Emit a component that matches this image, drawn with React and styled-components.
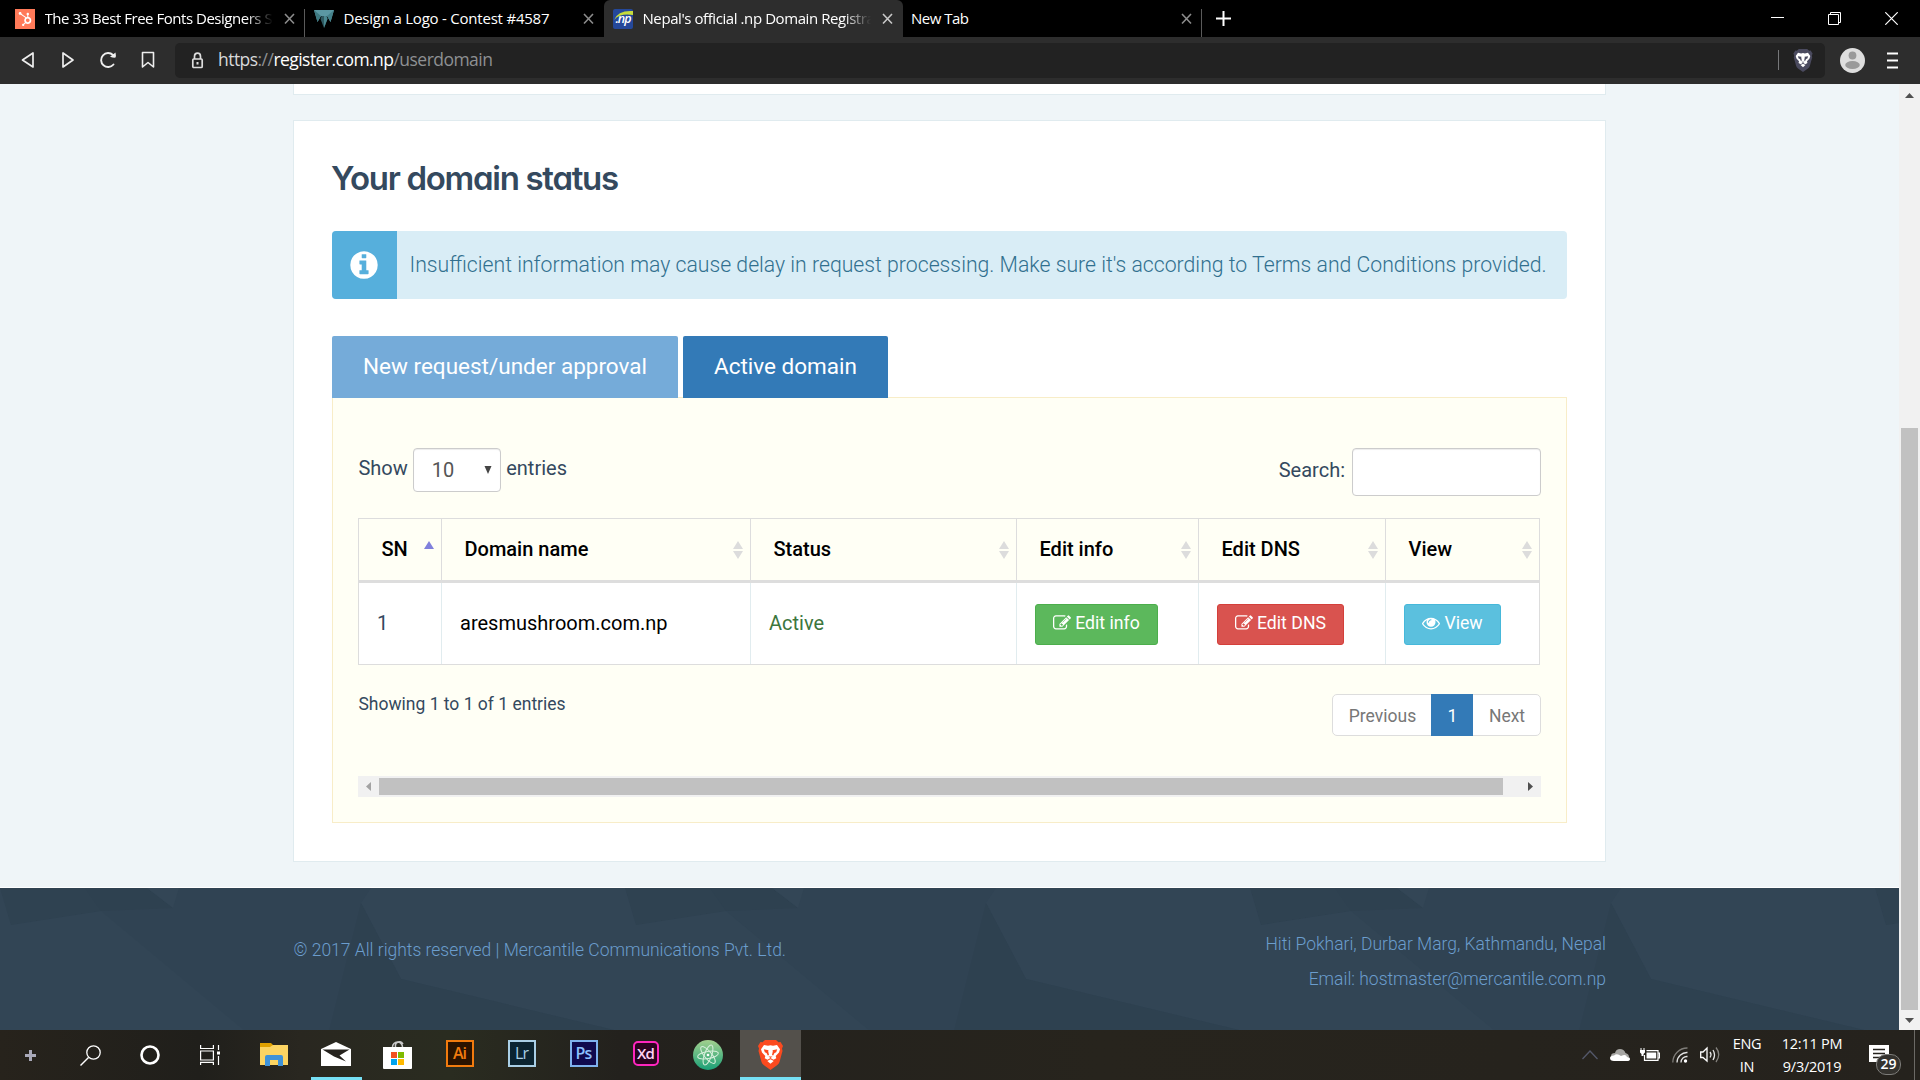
import React from "react";
import styled, { createGlobalStyle, css } from "styled-components";
import { FaHubspot } from "react-icons/fa";

const GlobalStyle = createGlobalStyle`
  * { box-sizing: border-box; }
  body { margin: 0; overflow: hidden; background: #000; }
  svg { display: block; flex: none; }
`;

const segoe = css`font-family: "Open Sans", "Noto Sans", sans-serif;`;

const Screen = styled.div`
  width: 1920px;
  height: 1080px;
  display: flex;
  flex-direction: column;
  overflow: hidden;
  font-family: Roboto, "Liberation Sans", sans-serif;
  color: #34495e;
`;

/* ---------- browser chrome ---------- */

const TabStrip = styled.div`
  ${segoe}
  height: 37px;
  flex: none;
  display: flex;
  padding-left: 6px;
  background: #000;
  color: #fff;
`;

const BrowserTab = styled.div`
  width: 299px;
  height: 37px;
  display: flex;
  align-items: center;
  padding: 0 10px 0 9px;
  position: relative;
  background: ${(p) => (p.$active ? "#2d2d2d" : "transparent")};
  border-radius: 6px 6px 0 0;
`;

const TabDivider = styled.i`
  position: absolute;
  right: 0;
  top: 9px;
  width: 1px;
  height: 28px;
  background: #5a5a5a;
`;

const TabTitle = styled.span`
  width: 228px;
  margin-left: ${(p) => (p.$bare ? -1 : 9.5)}px;
  padding-bottom: 2px;
  font-size: 15px;
  line-height: 24px;
  letter-spacing: ${(p) => p.$ls}px;
  white-space: nowrap;
  overflow: hidden;
  ${(p) => p.$fade && css`mask-image: linear-gradient(90deg, #000 88%, transparent 100%);`}
`;

const TabClose = styled.span`
  margin-left: auto;
  display: flex;
`;

const PlusButton = styled.span`
  width: 42px;
  display: flex;
  align-items: center;
  justify-content: center;
`;

const WindowButtons = styled.div`
  margin-left: auto;
  display: flex;
  align-items: center;
  gap: 44px;
  padding-right: 22px;
`;

const Toolbar = styled.div`
  ${segoe}
  height: 47px;
  flex: none;
  display: flex;
  align-items: center;
  padding: 0 22px 1px 20px;
  background: #2d2d2d;
`;

const NavIcons = styled.div`
  width: 155px;
  display: flex;
  align-items: center;
  gap: 23.5px;
`;

const UrlBox = styled.div`
  width: 1650px;
  height: 35px;
  display: flex;
  align-items: center;
  padding: 0 12px 0 16px;
  border-radius: 5px;
  background: #222;
`;

const Url = styled.span`
  margin-left: 14px;
  padding-bottom: 2px;
  font-size: 17.5px;
  line-height: 30px;
  letter-spacing: -0.54px;
  color: #8e9092;
  white-space: nowrap;
`;

const UrlPart = styled.span`
  color: ${(p) => p.$c};
`;

const UrlEnd = styled.div`
  margin-left: auto;
  display: flex;
  align-items: center;
  gap: 14px;
`;

const UrlRule = styled.i`
  width: 1px;
  height: 20px;
  background: #77787a;
`;

const ToolbarEnd = styled.div`
  margin-left: 15px;
  display: flex;
  align-items: center;
  gap: 22px;
`;

/* ---------- page ---------- */

const Viewport = styled.div`
  height: 946px;
  flex: none;
  display: flex;
`;

const Page = styled.div`
  width: 1899px;
  display: flex;
  flex-direction: column;
  background: #eff5f8;
`;

const PanelTail = styled.div`
  width: 1313px;
  height: 11px;
  flex: none;
  margin-left: 293px;
  background: #fff;
  border: 1px solid #e0ebef;
  border-top: 0;
`;

const Panel = styled.section`
  width: 1313px;
  height: 742px;
  margin: 25px 0 0 293px;
  padding: 37px 38px 0;
  background: #fff;
  border: 1px solid #e0ebef;
`;

const Heading = styled.h2`
  margin: 0 0 0 -1px;
  height: 73px;
  font: 600 33px/40px Inter, "Liberation Sans", sans-serif;
  font-feature-settings: "cv11";
  letter-spacing: -1.3px;
  color: #34495e;
`;

const Alert = styled.div`
  height: 68px;
  display: flex;
  align-items: center;
  border-radius: 4px;
  overflow: hidden;
  background: #d9edf6;
  font-weight: 300;
  font-size: 21.23px;
  color: #31708f;
  white-space: nowrap;
`;

const AlertIcon = styled.span`
  width: 65px;
  height: 68px;
  flex: none;
  margin-right: 12.5px;
  padding-right: 1px;
  display: flex;
  align-items: center;
  justify-content: center;
  background: #56afdc;
`;

const AlertText = styled.span`
  padding-bottom: 1px;
`;

const Pills = styled.div`
  display: flex;
  gap: 5px;
  margin-top: 37px;
  position: relative;
  z-index: 1;
`;

const Pill = styled.span`
  width: ${(p) => p.$w}px;
  height: 62px;
  padding-bottom: 3px;
  display: flex;
  align-items: center;
  justify-content: center;
  border-radius: 2px 2px 0 0;
  font-size: 22.5px;
  color: #fff;
  background: ${(p) => (p.$on ? "#337ab7" : "#75abd9")};
`;

const TablePanel = styled.div`
  height: 426px;
  margin-top: -1px;
  padding: 50px 25px 0;
  background: #fffff5;
  border: 1px solid #f8edc8;
`;

const Controls = styled.div`
  height: 70px;
  display: flex;
  justify-content: space-between;
  align-items: flex-start;
  padding-left: 0.4px;
  font-size: 20px;
`;

const Length = styled.label`
  display: flex;
  align-items: flex-start;
  line-height: 40px;
`;

const SelectBox = styled.span`
  width: 88px;
  height: 44px;
  margin: 0 5px 0 5.5px;
  padding: 0 8px 0 17.5px;
  display: flex;
  align-items: center;
  justify-content: space-between;
  border: 1px solid #ccc;
  border-radius: 4px;
  background: #fff;
  box-shadow: inset 0 1px 1px rgba(0, 0, 0, 0.075);
  color: #555;
`;

const Search = styled.label`
  display: flex;
  line-height: 44px;
  gap: 7px;
`;

const SearchInput = styled.span`
  width: 189px;
  height: 48px;
  border: 1px solid #ccc;
  border-radius: 4px;
  background: #fff;
  box-shadow: inset 0 1px 1px rgba(0, 0, 0, 0.075);
`;

const grid = css`
  display: grid;
  grid-template-columns: 83px 309px 266px 182px 187px 153px;
`;

const Table = styled.div`
  width: 1182px;
  height: 147px;
  border: 1px solid #ddd;
`;

const HeadRow = styled.div`
  ${grid}
  height: 64px;
  border-bottom: 3px solid #ddd;
`;

const HeadCell = styled.div`
  display: flex;
  align-items: center;
  justify-content: space-between;
  padding: 0 6px 0 22.5px;
  border-right: 1px solid #ddd;
  font-size: 20px;
  font-weight: 500;
  color: #000;
  white-space: nowrap;
  &:last-child { border-right: 0; }
`;

const HeadLabel = styled.span`
  padding-bottom: 2px;
`;

const BodyRow = styled.div`
  ${grid}
  height: 81px;
  background: #fff;
`;

const Cell = styled.div`
  display: flex;
  align-items: center;
  padding: ${(p) => (p.$action ? "1px 18px 0" : "0 18px 1px")};
  border-right: 1px solid #e1ecef;
  font-size: 20px;
  color: ${(p) => p.$c || "#34495e"};
  white-space: nowrap;
  &:last-child { border-right: 0; }
`;

const Button = styled.span`
  width: ${(p) => p.$w}px;
  height: 41px;
  padding-bottom: 2px;
  display: flex;
  align-items: center;
  justify-content: center;
  gap: 4px;
  border-radius: 3px;
  border: 1px solid ${(p) => p.$line};
  background: ${(p) => p.$bg};
  color: #fff;
  font-size: 17.7px;
`;

const Summary = styled.div`
  height: 111px;
  display: flex;
  justify-content: space-between;
  padding: 29px 0 0 0.4px;
  font-size: 17.5px;
  line-height: 20px;
`;

const Pager = styled.div`
  display: flex;
  height: 42px;
  border: 1px solid #ddd;
  border-radius: 5px;
  background: #fff;
  font-size: 17.5px;
  color: #777;
`;

const PagerItem = styled.span`
  width: ${(p) => p.$w}px;
  padding: 1px 0 0 1px;
  display: flex;
  align-items: center;
  justify-content: center;
  ${(p) => p.$on && css`
    margin: -1px 0;
    background: #337ab7;
    color: #fff;
  `}
`;

const HScroll = styled.div`
  height: 21px;
  display: flex;
  align-items: center;
  justify-content: space-between;
  padding: 0 8px;
  background: #f1f1f1;
`;

const HThumb = styled.span`
  width: 1124px;
  height: 17px;
  margin: 0 auto 0 8px;
  background: #c1c1c1;
`;

const VScroll = styled.div`
  width: 21px;
  display: flex;
  flex-direction: column;
  align-items: center;
  padding: 9px 0 7px;
  background: #f1f1f1;
`;

const VThumb = styled.span`
  width: 17px;
  height: 582px;
  margin-top: auto;
  margin-bottom: 8px;
  background: #c1c1c1;
`;

const Footer = styled.footer`
  height: 143px;
  margin-top: auto;
  border-top: 1px solid #fff;
  position: relative;
  background: #304353;
`;

const FooterArt = styled.svg`
  position: absolute;
  inset: 0;
`;

const FooterText = styled.div`
  position: relative;
  display: flex;
  justify-content: space-between;
  width: 1312.5px;
  margin-left: 293.5px;
  padding-top: 39px;
  font-weight: 300;
  font-size: 17.48px;
  line-height: 35px;
  color: #6b9dcd;
`;

const Copyright = styled.span`
  padding-top: 6px;
`;

const Address = styled.div`
  display: flex;
  flex-direction: column;
  align-items: flex-end;
`;

/* ---------- taskbar ---------- */

const Taskbar = styled.div`
  ${segoe}
  height: 50px;
  flex: none;
  display: flex;
  background: linear-gradient(90deg, #27231c 0, #201f1b 200px, #292720 300px, #2a2c20 450px, #23211d 620px, #27241d 1100px, #25221d 1920px);
  color: #fff;
`;

const TaskCell = styled.div`
  width: ${(p) => p.$w || 62}px;
  height: 50px;
  flex: none;
  display: flex;
  align-items: center;
  justify-content: center;
  background: ${(p) => (p.$active ? "#53504b" : "transparent")};
  margin-left: ${(p) => p.$ml || 0}px;
  position: relative;
`;

const Underline = styled.i`
  position: absolute;
  left: ${(p) => p.$inset}px;
  right: ${(p) => p.$inset}px;
  bottom: 0;
  height: 3px;
  background: #76e0f5;
`;

const AppBadge = styled.span`
  width: ${(p) => (p.$round ? 26 : 28)}px;
  height: ${(p) => (p.$round ? 25 : 27)}px;
  margin-bottom: 3px;
  display: flex;
  align-items: center;
  justify-content: center;
  border: 2px solid ${(p) => p.$line};
  border-radius: ${(p) => (p.$round ? 5 : 0)}px;
  background: ${(p) => p.$bg};
  color: ${(p) => p.$c || p.$line};
  font-size: ${(p) => (p.$round ? 15 : 16)}px;
  font-weight: ${(p) => p.$weight || 600};
  line-height: 20px;
  letter-spacing: -0.9px;
  padding: 0 1px 1px 0;
`;

const Tray = styled.div`
  margin-left: auto;
  display: flex;
  align-items: center;
`;

const TrayIcon = styled.svg`
  margin-left: ${(p) => p.$ml}px;
`;

const TrayText = styled.div`
  width: ${(p) => p.$w}px;
  margin-left: ${(p) => p.$ml}px;
  text-align: center;
  font-size: 14.5px;
  line-height: 22.5px;
  letter-spacing: ${(p) => p.$ls}px;
  white-space: nowrap;
  padding-top: 1px;
`;

const NoticeWrap = styled.div`
  width: 34px;
  height: 50px;
  margin-left: 21px;
  position: relative;
`;

const NoticeCount = styled.span`
  position: absolute;
  left: 7px;
  top: 24px;
  width: 25px;
  height: 21px;
  border: 1px solid #7d7c79;
  border-radius: 10px;
  background: #34322e;
  font-size: 14px;
  font-weight: 600;
  line-height: 18px;
  text-align: center;
`;

const DesktopEdge = styled.i`
  width: 6px;
  height: 50px;
  margin-left: 11px;
  border-left: 1px solid #6b6965;
`;

const CloseGlyph = ({ color = "#8c8c8c" }) => (
  <svg width="11" height="12" viewBox="0 0 11 12">
    <path d="M1 1L10 10.5M10 1L1 10.5" stroke={color} strokeWidth="1.6" />
  </svg>
);

const SortGlyph = ({ asc }) => (
  <svg width="12" height="18" viewBox="0 0 12 18">
    <path d="M6 0L11 8H1Z" fill={asc ? "#8080dc" : "#dcdcdc"} />
    {!asc && <path d="M6 18L11 10H1Z" fill="#dcdcdc" />}
  </svg>
);

const EditGlyph = () => (
  <svg width="18" height="18" viewBox="0 0 1792 1792" fill="#fff">
    <path d="M888 1184l116-116-152-152-116 116v56h96v96h56zm440-720q-16-16-33 1l-350 350q-17 17-1 33t33-1l350-350q17-17 1-33zm80 594v190q0 119-84.5 203.5t-203.5 84.5h-832q-119 0-203.5-84.5t-84.5-203.5v-832q0-119 84.5-203.5t203.5-84.5h832q63 0 117 25 15 7 18 23 3 17-9 29l-49 49q-14 14-32 8-23-6-45-6h-832q-66 0-113 47t-47 113v832q0 66 47 113t113 47h832q66 0 113-47t47-113v-126q0-13 9-22l64-64q15-15 35-7t20 29zm-96-738l288 288-672 672h-288v-288zm444 132l-92 92-288-288 92-92q28-28 68-28t68 28l152 152q28 28 28 68t-28 68z" />
  </svg>
);

const EyeGlyph = () => (
  <svg width="18" height="18" viewBox="0 0 1792 1792" fill="#fff">
    <path d="M1664 960q-152-236-381-353 61 104 61 225 0 185-131.5 316.5t-316.5 131.5-316.5-131.5-131.5-316.5q0-121 61-225-229 117-381 353 133 205 333.5 326.5t434.5 121.5 434.5-121.5 333.5-326.5zm-720-384q0-20-14-34t-34-14q-125 0-214.5 89.5t-89.5 214.5q0 20 14 34t34 14 34-14 14-34q0-86 61-147t147-61q20 0 34-14t14-34zm848 384q0 34-20 69-140 230-376.5 368.5t-499.5 138.5-499.5-139-376.5-368q-20-35-20-69t20-69q140-229 376.5-368t499.5-139 499.5 139 376.5 368q20 35 20 69z" />
  </svg>
);

const InfoGlyph = () => (
  <svg width="32" height="32" viewBox="0 0 1792 1792" fill="#fff">
    <path d="M1152 1376v-160q0-14-9-23t-23-9h-96v-512q0-14-9-23t-23-9h-320q-14 0-23 9t-9 23v160q0 14 9 23t23 9h96v320h-96q-14 0-23 9t-9 23v160q0 14 9 23t23 9h448q14 0 23-9t9-23zm-128-896v-160q0-14-9-23t-23-9h-192q-14 0-23 9t-9 23v160q0 14 9 23t23 9h192q14 0 23-9t9-23zm640 416q0 209-103 385.5t-279.5 279.5-385.5 103-385.5-103-279.5-279.5-103-385.5 103-385.5 279.5-279.5 385.5-103 385.5 103 279.5 279.5 103 385.5z" />
  </svg>
);

const Lion = ({ width, height, shield }) => (
  <svg width={width} height={height} viewBox="0 0 25 30">
    <path d="M7 0H18L20.500 2.300L22.500 2L25 6L24 8.500L24.500 11L21.500 22Q21 24 19 25.300L12.500 30L6 25.300Q4 24 3.500 22L0.500 11L1 8.500L0 6L2.500 2L4.500 2.300Z" fill={shield} />
    <path d="M6 5L10 5.800L12.500 5.200L15 5.800L19 5L22 9.200L21 12.500L17.700 16L18.300 18.300L15.500 19.800L12.500 18L9.500 19.800L6.700 18.300L7.300 16L4 12.500L3 9.200Z" fill="#fff" />
    <path d="M9.300 21L12.500 19.300L15.700 21L12.500 23.800Z" fill="#fff" />
    <path d="M5.800 9.300L10.500 10.200L10.200 11.200L11 15L9.800 15.600L8.500 13L6.800 12.300ZM19.200 9.300L14.500 10.200L14.800 11.200L14 15L15.200 15.600L16.500 13L18.200 12.300ZM10.500 16.600H14.500L12.500 18Z" fill={shield} />
  </svg>
);

const tile = (
  <g>
    <path d="M0 0L11 37L101 23L85 0Z" fill="#2f4251" />
    <path d="M11 37L101 23L245 143H0V0Z" fill="#324555" />
    <path d="M85 0L101 23L173 20L147 0Z" fill="#2e4150" />
    <path d="M147 0L173 20L179 0Z" fill="#334656" />
    <path d="M371 0L361 15L401 91L618 143H640L625 0Z" fill="#324555" />
    <path d="M361 15L401 91L618 143H329Z" fill="#2e4150" />
  </g>
);

const tabs = [
  { title: "The 33 Best Free Fonts Designers S", icon: "hub", fade: true, divider: true, ls: -0.47 },
  { title: "Design a Logo - Contest #4587", icon: "logo", ls: -0.22 },
  { title: "Nepal's official .np Domain Registra", icon: "np", active: true, fade: true, ls: -0.42 },
  { title: "New Tab", divider: true, ls: -0.5 },
];

const HubTile = styled.span`
  width: 20px;
  height: 20px;
  display: flex;
  align-items: center;
  justify-content: center;
  background: #ff7a59;
`;

const NpTile = styled.span`
  width: 20px;
  height: 20px;
  border-radius: 2px;
  position: relative;
  background: #24489a;
  font: italic 600 12.5px/20px "Open Sans", sans-serif;
  letter-spacing: -1px;
  text-align: center;
`;

const NpArc = styled.svg`
  position: absolute;
  left: 0;
  top: 0;
`;

const NpLabel = styled.span`
  position: relative;
`;

const TabIcon = ({ kind }) => {
  if (kind === "hub")
    return (
      <HubTile>
        <FaHubspot size={14} color="#fff" />
      </HubTile>
    );
  if (kind === "logo")
    return (
      <svg width="20" height="20" viewBox="0 0 20 20">
        <path d="M0 1H20L16.500 13L13 7H7L3.500 13Z" fill="#5b98a3" />
        <path d="M0 1L7 7L3.500 13Z" fill="#3e7880" />
        <path d="M20 1L13 7L16.500 13Z" fill="#44818a" />
        <path d="M7.500 7H12.500L13.500 10L10 19L6.500 10Z" fill="#2f5a61" />
        <path d="M10 7H12.500L13.500 10L10 19Z" fill="#4b8991" />
      </svg>
    );
  if (kind === "np")
    return (
      <NpTile>
        <NpArc width="20" height="20" viewBox="0 0 20 20">
          <path d="M1 11Q5 1 20 2V6Q7 4 1 11Z" fill="#c6dc3c" />
        </NpArc>
        <NpLabel>.np</NpLabel>
      </NpTile>
    );
  return null;
};

const columns = ["SN", "Domain name", "Status", "Edit info", "Edit DNS", "View"];

export default function App() {
  return (
    <Screen>
      <GlobalStyle />
      <TabStrip>
        {tabs.map((t) => (
          <BrowserTab key={t.title} $active={t.active}>
            <TabIcon kind={t.icon} />
            <TabTitle $fade={t.fade} $bare={!t.icon} $ls={t.ls}>{t.title}</TabTitle>
            <TabClose><CloseGlyph color={t.active ? "#c8c8c8" : undefined} /></TabClose>
            {t.divider && <TabDivider />}
          </BrowserTab>
        ))}
        <PlusButton>
          <svg width="15" height="15" viewBox="0 0 15 15">
            <path d="M7.500 0V15M0 7.500H15" stroke="#fff" strokeWidth="2" />
          </svg>
        </PlusButton>
        <WindowButtons>
          <svg width="13" height="14" viewBox="0 0 13 14"><path d="M0 5.500H13" stroke="#fff" /></svg>
          <svg width="13" height="13" viewBox="0 0 13 13">
            <path d="M.5 2.500H10.500V12.500H.5ZM2.500 2.500V.5H12.500V10.500H10.500" fill="none" stroke="#fff" />
          </svg>
          <svg width="13" height="13" viewBox="0 0 13 13"><path d="M.3 .3L12.700 12.700M12.700 .3L.3 12.700" stroke="#fff" strokeWidth="1.200" /></svg>
        </WindowButtons>
      </TabStrip>

      <Toolbar>
        <NavIcons>
          <svg width="16" height="18" viewBox="0 0 16 18"><path d="M13 2V16L2.500 9Z" fill="none" stroke="#eee" strokeWidth="1.700" strokeLinejoin="round" /></svg>
          <svg width="16" height="18" viewBox="0 0 16 18"><path d="M3 2V16L13 9Z" fill="none" stroke="#eee" strokeWidth="1.700" strokeLinejoin="round" /></svg>
          <svg width="18" height="18" viewBox="0 0 18 18">
            <path d="M14.500 13.500A7 7 0 1 1 14 4" fill="none" stroke="#eee" strokeWidth="1.900" strokeLinecap="round" />
            <path d="M11 5.800Q15 7 16.500 6.500Q17.300 5 16.500 1.500Z" fill="#eee" />
          </svg>
          <svg width="14" height="18" viewBox="0 0 14 18"><path d="M1.500 1.500H12.500V16L7 11.500L1.500 16Z" fill="none" stroke="#eee" strokeWidth="1.600" strokeLinejoin="round" /></svg>
        </NavIcons>
        <UrlBox>
          <svg width="13" height="17" viewBox="0 0 13 17">
            <path d="M3.500 7V4.500A3 3.300 0 0 1 9.500 4.500V7" fill="none" stroke="#ddd" strokeWidth="1.700" />
            <rect x="1.800" y="7" width="9.400" height="8.500" rx="1" fill="none" stroke="#ddd" strokeWidth="1.700" />
            <rect x="5.500" y="10" width="2" height="2.500" fill="#ddd" />
          </svg>
          <Url>
            <UrlPart $c="#d8d9da">https</UrlPart>://<UrlPart $c="#fff">register.com.np</UrlPart>/userdomain
          </Url>
          <UrlEnd>
            <UrlRule />
            <Lion width={20} height={23} shield="#4a4a5e" />
          </UrlEnd>
        </UrlBox>
        <ToolbarEnd>
          <svg width="25" height="25" viewBox="0 0 25 25">
            <circle cx="12.500" cy="12.500" r="12.500" fill="#dedede" />
            <circle cx="12.500" cy="7.500" r="3.900" fill="#9a9a9a" />
            <ellipse cx="12.500" cy="17" rx="7.300" ry="4" fill="#9a9a9a" />
          </svg>
          <svg width="11" height="17" viewBox="0 0 11 17">
            <path d="M0 1.500H11M0 8.500H11M0 15.500H11" stroke="#fff" strokeWidth="2" />
          </svg>
        </ToolbarEnd>
      </Toolbar>

      <Viewport>
        <Page>
          <PanelTail />
          <Panel>
            <Heading>Your domain status</Heading>
            <Alert>
              <AlertIcon><InfoGlyph /></AlertIcon>
              <AlertText>
                Insufficient information may cause delay in request processing. Make sure it's according to Terms and Conditions provided.
              </AlertText>
            </Alert>
            <Pills>
              <Pill $w={346}>New request/under approval</Pill>
              <Pill $w={205} $on>Active domain</Pill>
            </Pills>
            <TablePanel>
              <Controls>
                <Length>
                  Show
                  <SelectBox>
                    10
                    <svg width="8" height="8" viewBox="0 0 8 8"><path d="M.5 0H7.500L4 8Z" fill="#444" /></svg>
                  </SelectBox>
                  entries
                </Length>
                <Search>
                  Search:
                  <SearchInput />
                </Search>
              </Controls>
              <Table>
                <HeadRow>
                  {columns.map((c, i) => (
                    <HeadCell key={c}><HeadLabel>{c}</HeadLabel><SortGlyph asc={i === 0} /></HeadCell>
                  ))}
                </HeadRow>
                <BodyRow>
                  <Cell>1</Cell>
                  <Cell $c="#000">aresmushroom.com.np</Cell>
                  <Cell $c="#3c763d">Active</Cell>
                  <Cell $action><Button $w={123} $bg="#5cb85c" $line="#4cae4c"><EditGlyph />Edit info</Button></Cell>
                  <Cell $action><Button $w={127} $bg="#d9534f" $line="#d43f3a"><EditGlyph />Edit DNS</Button></Cell>
                  <Cell $action><Button $w={97} $bg="#5bc0de" $line="#46b8da"><EyeGlyph />View</Button></Cell>
                </BodyRow>
              </Table>
              <Summary>
                Showing 1 to 1 of 1 entries
                <Pager>
                  <PagerItem $w={98}>Previous</PagerItem>
                  <PagerItem $w={42} $on>1</PagerItem>
                  <PagerItem $w={67}>Next</PagerItem>
                </Pager>
              </Summary>
              <HScroll>
                <svg width="5" height="9" viewBox="0 0 5 9"><path d="M5 0V9L0 4.500Z" fill="#a3a3a3" /></svg>
                <HThumb />
                <svg width="5" height="9" viewBox="0 0 5 9"><path d="M0 0V9L5 4.500Z" fill="#505050" /></svg>
              </HScroll>
            </TablePanel>
          </Panel>
          <Footer>
            <FooterArt width="1899" height="142" viewBox="0 0 1899 142">
              {[-625, 0, 625, 1250, 1875].map((x) => (
                <g key={x} transform={`translate(${x} 0)`}>{tile}</g>
              ))}
            </FooterArt>
            <FooterText>
              <Copyright>© 2017 All rights reserved | Mercantile Communications Pvt. Ltd.</Copyright>
              <Address>
                <span>Hiti Pokhari, Durbar Marg, Kathmandu, Nepal</span>
                <span>Email: hostmaster@mercantile.com.np</span>
              </Address>
            </FooterText>
          </Footer>
        </Page>
        <VScroll>
          <svg width="9" height="5" viewBox="0 0 9 5"><path d="M0 5H9L4.500 0Z" fill="#505050" /></svg>
          <VThumb />
          <svg width="9" height="5" viewBox="0 0 9 5"><path d="M0 0H9L4.500 5Z" fill="#505050" /></svg>
        </VScroll>
      </Viewport>

      <Taskbar>
        <TaskCell $w={60}>
          <svg width="11" height="11" viewBox="0 0 11 11"><path d="M5.500 0V11M0 5.500H11" stroke="#a9a9b9" strokeWidth="3" /></svg>
        </TaskCell>
        <TaskCell $w={60}>
          <svg width="21" height="21" viewBox="0 0 21 21"><circle cx="13.500" cy="7.500" r="6.700" fill="none" stroke="#fff" strokeWidth="1.300" /><path d="M8.500 12.500L.5 20.500" stroke="#fff" strokeWidth="1.400" /></svg>
        </TaskCell>
        <TaskCell $w={60}>
          <svg width="20" height="20" viewBox="0 0 20 20"><circle cx="10" cy="10" r="8.500" fill="none" stroke="#fff" strokeWidth="2.600" /></svg>
        </TaskCell>
        <TaskCell $w={60}>
          <svg width="21" height="20" viewBox="0 0 21 20">
            <path d="M.6 0V3.500H13.400V0M.6 6H13.400V15H.6ZM.6 20V17.300H13.400V20M18.500 0V5M18.500 11V20" fill="none" stroke="#fff" strokeWidth="1.200" />
            <rect x="17" y="6.500" width="3" height="3" fill="#fff" />
          </svg>
        </TaskCell>
        <TaskCell $ml={3}>
          <svg width="28" height="24" viewBox="0 0 28 24">
            <path d="M0 0H11L13 2V5H0Z" fill="#e0a100" />
            <path d="M0 4H10L13 2H28V22H0Z" fill="#fcd462" />
            <path d="M5 23V14Q5 12 7 12H21Q23 12 23 14V23H18V17H10V23Z" fill="#3f92d8" />
          </svg>
        </TaskCell>
        <TaskCell>
          <svg width="30" height="26" viewBox="0 0 30 26">
            <path d="M0 7L15 0L30 7V24H0Z" fill="#fff" />
            <path d="M1.500 7.500H28.500L18.500 13.500L25 19.500L13 14.500Z" fill="#25221d" />
          </svg>
          <Underline $inset={5.5} />
        </TaskCell>
        <TaskCell $w={61}>
          <svg width="29" height="29" viewBox="0 0 29 29">
            <path d="M9.500 8V6A5 5 0 0 1 19.500 6V8M12.500 8V5.500A4 4 0 0 1 20 3" fill="none" stroke="#c9c9c9" strokeWidth="1.500" />
            <path d="M0 6H29V27Q29 28 28 28H1Q0 28 0 27Z" fill="#fff" />
            <rect x="8" y="11" width="6" height="6" fill="#f25022" />
            <rect x="15" y="11" width="6" height="6" fill="#7fba00" />
            <rect x="8" y="18" width="6" height="6" fill="#00a4ef" />
            <rect x="15" y="18" width="6" height="6" fill="#ffb900" />
          </svg>
        </TaskCell>
        <TaskCell $ml={1}><AppBadge $line="#f27b0e" $bg="#2b1300">Ai</AppBadge></TaskCell>
        <TaskCell><AppBadge $line="#a9cfe6" $bg="#0b2431" $weight={500}>Lr</AppBadge></TaskCell>
        <TaskCell><AppBadge $line="#7fb2ee" $bg="#100a4e" $c="#8cc0ff">Ps</AppBadge></TaskCell>
        <TaskCell><AppBadge $round $line="#ff26be" $bg="#2b0420" $c="#ffd2f4">Xd</AppBadge></TaskCell>
        <TaskCell>
          <svg width="30" height="30" viewBox="0 0 30 30">
            <defs>
              <linearGradient id="atom" x1="0" y1="0" x2="0" y2="1">
                <stop offset="0" stopColor="#a3d08e" />
                <stop offset="1" stopColor="#1aa077" />
              </linearGradient>
            </defs>
            <circle cx="15" cy="15" r="15" fill="url(#atom)" />
            <g fill="none" stroke="#d6efdb" strokeWidth="1">
              <ellipse cx="15" cy="15" rx="10.500" ry="3.600" transform="rotate(-10 15 15)" />
              <ellipse cx="15" cy="15" rx="10.500" ry="3.600" transform="rotate(50 15 15)" />
              <ellipse cx="15" cy="15" rx="10.500" ry="3.600" transform="rotate(110 15 15)" />
            </g>
            <circle cx="15" cy="15" r="1.300" fill="#fff" />
          </svg>
        </TaskCell>
        <TaskCell $w={61} $ml={1} $active>
          <Lion width={25} height={30} shield="#fb4a1f" />
          <Underline $inset={0} />
        </TaskCell>

        <Tray>
          <TrayIcon width="16" height="10" viewBox="0 0 16 10"><path d="M.5 9L8 1L15.500 9" fill="none" stroke="#54586a" strokeWidth="1.300" /></TrayIcon>
          <TrayIcon $ml={12} width="20" height="14" viewBox="0 0 20 14">
            <path d="M1 8Q1 5 5 5Q6 1 10 1Q14 1 15.500 5Q19 6 19 9L10 12Z" fill="#a6a5a2" />
            <path d="M4 13Q0 13 0 10Q0 7.500 4 7.500Q7 5 11 8Q16 5.500 17 9Q20 9 20 11Q20 13 17 13Z" fill="#fff" />
          </TrayIcon>
          <TrayIcon $ml={10} width="20" height="14" viewBox="0 0 20 14">
            <path d="M4.500 7V12.400H18V2.600H6.500M18.500 5H19.500V10H18.500" fill="none" stroke="#fff" strokeWidth="1.200" />
            <rect x="6.500" y="4.500" width="9.700" height="6" fill="#fff" />
            <path d="M1 0V2.500M4 0V2.500" stroke="#fff" strokeWidth="1" />
            <path d="M0 2H5V4.500L3.500 6V8H1.500V6L0 4.500Z" fill="#fff" />
          </TrayIcon>
          <TrayIcon $ml={12} width="16" height="16" viewBox="0 0 16 16">
            <circle cx="13.500" cy="14" r="1.700" fill="#fff" />
            <path d="M9 15.500A6 6 0 0 1 15.500 9.500M5 15.500A10 10 0 0 1 15.500 5.500" fill="none" stroke="#e2e2e2" strokeWidth="1.300" />
            <path d="M.8 15.500A14.500 14.500 0 0 1 15.500 1" fill="none" stroke="#7f7d79" strokeWidth="1.300" />
          </TrayIcon>
          <TrayIcon $ml={12} width="20" height="18" viewBox="0 0 20 18">
            <path d="M.7 6H3L7 2V15L3 11.500H.7Z" fill="none" stroke="#fff" strokeWidth="1.300" />
            <path d="M10 6Q12 8.500 10 11.500M13 4Q16 8.500 13 14" fill="none" stroke="#e8e8e8" strokeWidth="1.300" />
            <path d="M16 1.500Q21.500 8.500 16 16" fill="none" stroke="#85837f" strokeWidth="1.300" />
          </TrayIcon>
          <TrayText $w={40} $ml={7} $ls={-0.3}>ENG<br />IN</TrayText>
          <TrayText $w={72} $ml={9} $ls={-0.25}>12:11 PM<br />9/3/2019</TrayText>
          <NoticeWrap>
            <svg width="34" height="50" viewBox="0 0 34 50">
              <path d="M0 15H20V32H13L9 36V32H0Z" fill="#fff" />
              <path d="M4 19.500H16M4 23.500H16M4 27.500H11" stroke="#25221d" strokeWidth="1.300" />
            </svg>
            <NoticeCount>29</NoticeCount>
          </NoticeWrap>
          <DesktopEdge />
        </Tray>
      </Taskbar>
    </Screen>
  );
}
